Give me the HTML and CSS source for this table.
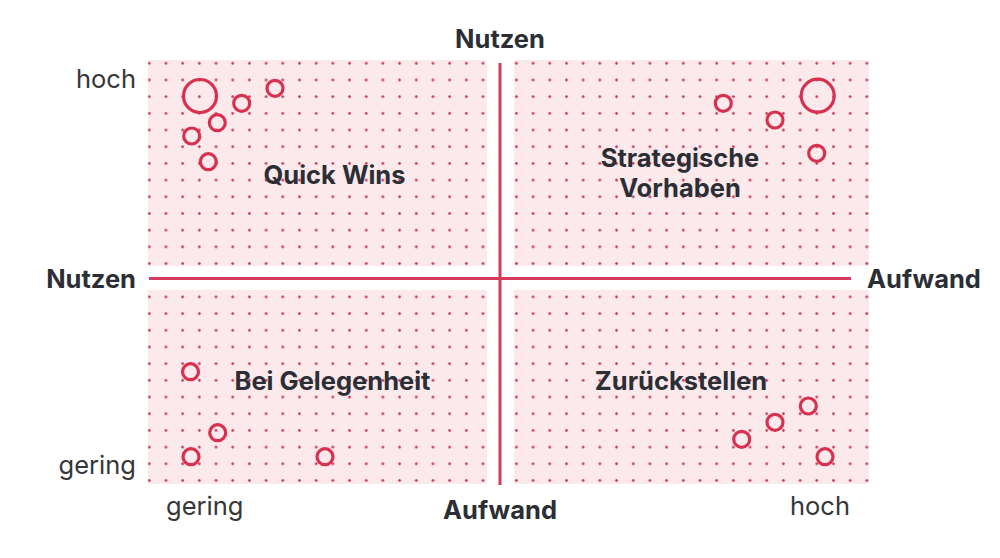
FILE: index.html
```html
<!DOCTYPE html>
<html lang="de">
<head>
<meta charset="utf-8">
<title>Aufwand-Nutzen-Matrix</title>
<link rel="stylesheet" href="styles.css">
</head>
<body>
<div class="chart">
  <div class="title-top">Nutzen</div>

  <div class="y-axis">
    <div class="tick tick-high">hoch</div>
    <div class="axis-name axis-name-y">Nutzen</div>
    <div class="tick tick-low">gering</div>
  </div>

  <div class="plot">
    <div class="quadrant q-tl"><span class="q-label">Quick Wins</span></div>
    <div class="quadrant q-tr"><span class="q-label">Strategische<br>Vorhaben</span></div>
    <div class="quadrant q-bl"><span class="q-label">Bei Gelegenheit</span></div>
    <div class="quadrant q-br"><span class="q-label">Zurückstellen</span></div>

    <svg class="overlay" viewBox="148 60 721 424" width="721" height="424" aria-hidden="true">
      <line class="axis-line" x1="500" y1="63" x2="500" y2="485"/>
      <line class="axis-line" x1="149" y1="278.5" x2="851" y2="278.5"/>
      <g class="bubbles">
        <circle cx="200" cy="96" r="16.5"/>
        <circle cx="241.7" cy="103.3" r="8"/>
        <circle cx="275" cy="88.3" r="8"/>
        <circle cx="217.3" cy="122.7" r="8"/>
        <circle cx="191.7" cy="136" r="8"/>
        <circle cx="208.3" cy="161.7" r="8"/>

        <circle cx="723.3" cy="103.3" r="8"/>
        <circle cx="817.7" cy="95.7" r="16.5"/>
        <circle cx="775" cy="120" r="8"/>
        <circle cx="816.7" cy="153.3" r="8"/>

        <circle cx="190.5" cy="371.7" r="8"/>
        <circle cx="217.7" cy="432.7" r="8"/>
        <circle cx="191" cy="456.7" r="8"/>
        <circle cx="325" cy="456.7" r="8"/>

        <circle cx="808.3" cy="406" r="8"/>
        <circle cx="775" cy="422.3" r="8"/>
        <circle cx="741.7" cy="439.3" r="8"/>
        <circle cx="825" cy="456.7" r="8"/>
      </g>
    </svg>
  </div>

  <div class="x-end">
    <div class="axis-name axis-name-x">Aufwand</div>
  </div>

  <div class="x-axis">
    <div class="tick tick-left">gering</div>
    <div class="axis-name axis-name-bottom">Aufwand</div>
    <div class="tick tick-right">hoch</div>
  </div>
</div>
</body>
</html>
```

FILE: styles.css
```css
* {
  box-sizing: border-box;
}

html, body {
  margin: 0;
  padding: 0;
  background: #ffffff;
}

body {
  width: 1000px;
  height: 558px;
  overflow: hidden;
  font-family: Inter, "Noto Sans", "Liberation Sans", sans-serif;
  font-size: 25.5px;
  line-height: 30px;
  color: #2b2f35;
}

.chart {
  display: grid;
  grid-template-columns: 148px 721px 1fr;
  grid-template-rows: 60px 424px 1fr;
  height: 558px;
}

.title-top {
  grid-column: 1 / -1;
  text-align: center;
  padding-top: 24px;
  font-weight: 700;
}

.axis-name {
  font-weight: 700;
  color: #2b2f35;
}

.tick {
  font-weight: 400;
  color: #353739;
}

/* Left axis */
.y-axis {
  display: flex;
  flex-direction: column;
  align-items: flex-end;
  padding-right: 12px;
  padding-top: 4px;
}

.axis-name-y {
  margin-top: 170px;
}

.tick-low {
  margin-top: 156px;
}

/* Right axis name */
.x-end {
  padding-top: 204px;
  margin-left: -2px;
}

/* Plot */
.plot {
  position: relative;
  display: grid;
  grid-template-columns: 339px 355px;
  grid-template-rows: 206px 194px;
  column-gap: 27px;
  row-gap: 24px;
}

.quadrant {
  display: flex;
  align-items: center;
  justify-content: center;
  text-align: center;
  background-color: #fce9ec;
  background-image: radial-gradient(circle, #c9405f 0, #c9405f 1px, rgba(201, 64, 95, 0) 1.6px);
  background-size: 16.7px 16.7px;
  background-attachment: fixed;
  background-position: 140.95px 54.95px;
}

.q-label {
  font-weight: 700;
  color: #2b2f35;
}

.q-tl {
  padding-left: 34px;
  padding-top: 24px;
}

.q-tr {
  padding-right: 23px;
  padding-top: 20px;
}

.q-bl {
  padding-left: 30px;
  padding-bottom: 12px;
}

.q-br {
  padding-right: 21px;
  padding-bottom: 12px;
}

.overlay {
  position: absolute;
  left: 0;
  top: 0;
  overflow: visible;
  pointer-events: none;
}

.axis-line {
  stroke: #d63a5d;
  stroke-width: 3;
}

.bubbles circle {
  fill: none;
  stroke: #d8304f;
  stroke-width: 3.2;
}

/* Bottom axis */
.x-axis {
  grid-column: 1 / -1;
  display: grid;
  grid-template-columns: 1fr auto 1fr;
  align-items: start;
}

.tick-left {
  justify-self: start;
  padding-left: 166px;
  padding-top: 7px;
}

.axis-name-bottom {
  padding-top: 11px;
}

.tick-right {
  justify-self: end;
  padding-right: 150px;
  padding-top: 7px;
}
```
